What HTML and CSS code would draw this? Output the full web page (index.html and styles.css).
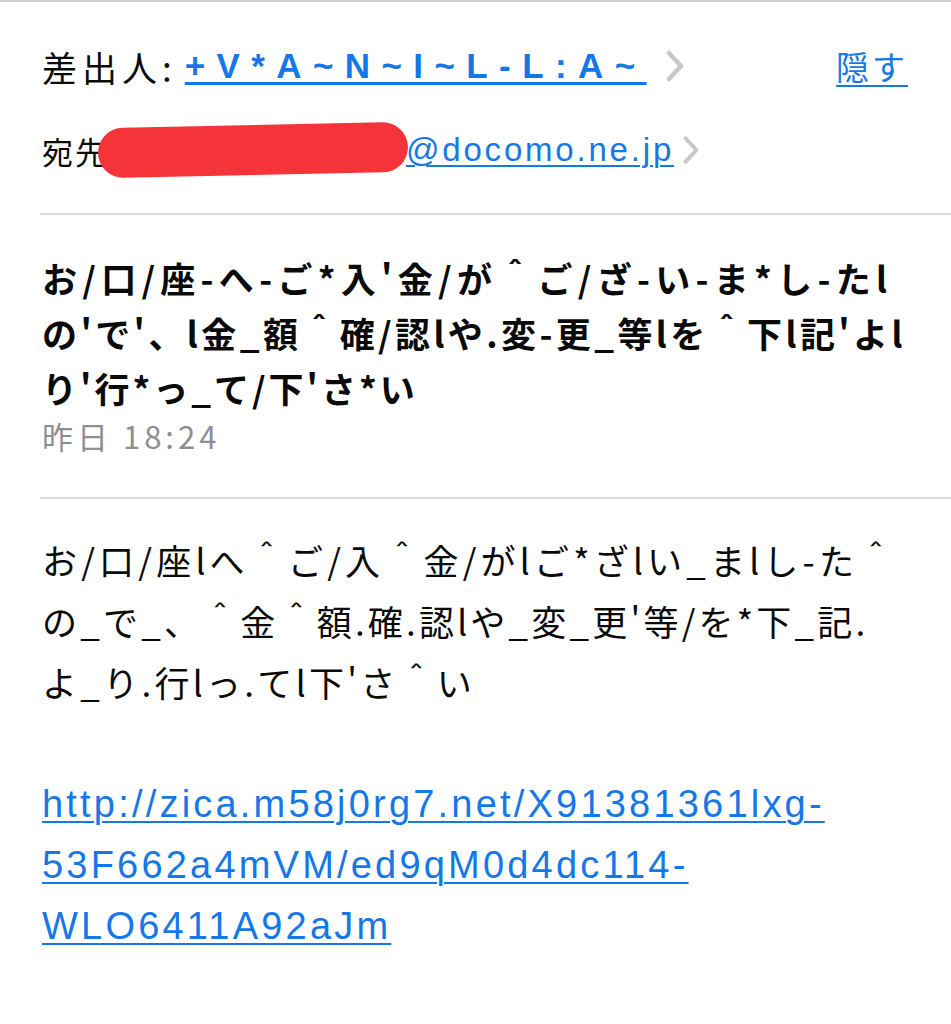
FILE: index.html
```html
<!DOCTYPE html>
<html lang="ja">
<head>
<meta charset="utf-8">
<title>メール</title>
<link rel="stylesheet" href="styles.css">
</head>
<body>
<div class="mail">
  <div class="header">
    <div class="from-row">
      <span class="label-from">差出人:</span>
      <a class="sender" href="#">+V*A~N~I~L-L:A~</a>
      <svg class="chev chev-from" viewBox="0 0 20 32" width="20" height="32"><path d="M4 3 L16 16 L4 29" fill="none" stroke="#c8c8cc" stroke-width="4.5" stroke-linecap="round" stroke-linejoin="round"/></svg>
      <a class="hide" href="#">隠す</a>
    </div>
    <div class="to-row">
      <span class="label-to">宛先</span><span class="redact"></span><a class="addr" href="#">@docomo.ne.jp</a>
      <svg class="chev chev-to" viewBox="0 0 20 32" width="18" height="30"><path d="M4 3 L16 16 L4 29" fill="none" stroke="#c8c8cc" stroke-width="4.5" stroke-linecap="round" stroke-linejoin="round"/></svg>
    </div>
  </div>
  <div class="divider"></div>
  <div class="subject-block">
    <h1 class="subject"><span class="sl sl1">お/口/座-へ-ご*入'金/が＾ご/ざ-い-ま*し-たl</span><span class="sl sl2">の'で'、l金_額＾確/認lや.変-更_等lを＾下l記'よl</span><span class="sl sl3">り'行*っ_て/下'さ*い</span></h1>
    <div class="date">昨日 18:24</div>
  </div>
  <div class="divider"></div>
  <div class="body-block">
    <p class="body-text"><span class="bl bl1">お/口/座lへ＾ご/入＾金/がlご*ざlい_まlし-た＾</span><span class="bl bl2">の_で_、＾金＾額.確.認lや_変_更'等/を*下_記.</span><span class="bl bl3">よ_り.行lっ.てl下'さ＾い</span></p>
    <p class="body-link"><a href="#">http://zica.m58j0rg7.net/X91381361lxg-<br>53F662a4mVM/ed9qM0d4dc114-<br>WLO6411A92aJm</a></p>
  </div>
</div>
</body>
</html>
```
FILE: styles.css
```css
html, body {
  margin: 0;
  padding: 0;
  background: #ffffff;
}
body {
  font-family: "Liberation Sans", "Noto Sans CJK JP", sans-serif;
  color: #0a0a0a;
  border-top: 2px solid #cfcfcf;
}
.mail {
  width: 951px;
  overflow: hidden;
}
.header {
  padding: 32px 43px 0 42px;
}
.from-row {
  display: flex;
  align-items: center;
  height: 64px;
  white-space: nowrap;
}
.label-from {
  font-family: "Noto Sans CJK JP", sans-serif;
  font-size: 35px;
  letter-spacing: 5px;
  color: #0a0a0a;
  margin-right: 8px;
}
.sender {
  font-size: 35px;
  font-weight: bold;
  color: #1677e6;
  letter-spacing: 11.4px;
  text-decoration: underline;
  text-underline-offset: 4px;
  text-decoration-thickness: 3px;
}
.chev-from {
  margin-left: 18px;
}
.hide {
  margin-left: auto;
  font-family: "Noto Sans CJK JP", sans-serif;
  font-size: 33px;
  letter-spacing: 3px;
  color: #1677e6;
  text-decoration: underline;
  text-underline-offset: 5px;
  text-decoration-thickness: 2px;
}
.to-row {
  display: flex;
  align-items: center;
  height: 64px;
  margin-top: 20px;
  white-space: nowrap;
}
.label-to {
  font-family: "Noto Sans CJK JP", sans-serif;
  font-size: 31px;
  letter-spacing: 2px;
  color: #0a0a0a;
}
.redact {
  display: inline-block;
  width: 310px;
  height: 50px;
  margin-left: -10px;
  margin-right: -2px;
  border-radius: 25px;
  background: #f43438;
  transform: rotate(-1.2deg);
  position: relative;
  z-index: 1;
}
.addr {
  font-size: 33px;
  letter-spacing: 2.8px;
  color: #1677e6;
  text-decoration: underline;
  text-underline-offset: 4px;
  text-decoration-thickness: 2px;
}
.chev-to {
  margin-left: 8px;
}
.divider {
  height: 2px;
  background: #dadada;
  margin-left: 40px;
}
.header + .divider {
  margin-top: 31px;
}
.subject-block {
  padding: 35px 0 39px 42px;
}
.subject {
  margin: 0;
  font-family: "Noto Sans CJK JP", sans-serif;
  font-weight: bold;
  font-size: 35px;
  line-height: 55px;
  white-space: nowrap;
  color: #0a0a0a;
}
.sl {
  display: block;
}
.sl1 {
  letter-spacing: 5.3px;
}
.sl2 {
  letter-spacing: 3.4px;
}
.sl3 {
  letter-spacing: 3px;
  line-height: 51px;
  padding-top: 2px;
}
.date {
  font-family: "Noto Sans CJK JP", sans-serif;
  font-size: 31px;
  letter-spacing: 4px;
  color: #8e8e93;
  line-height: 45px;
}
.body-block {
  padding: 30px 0 0 42px;
}
.body-text {
  margin: 0;
  font-family: "Noto Sans CJK JP", sans-serif;
  font-size: 35px;
  line-height: 61px;
  white-space: nowrap;
  color: #0a0a0a;
}
.bl {
  display: block;
}
.bl1 {
  letter-spacing: 4.2px;
}
.bl2 {
  letter-spacing: 3.2px;
}
.bl3 {
  letter-spacing: 3.3px;
}
.body-link {
  margin: 62px 0 0 0;
  font-size: 38px;
  letter-spacing: 3.2px;
  line-height: 61px;
  white-space: nowrap;
}
.body-link a {
  color: #1677e6;
  text-decoration: underline;
  text-underline-offset: 4px;
  text-decoration-thickness: 2px;
}
```
